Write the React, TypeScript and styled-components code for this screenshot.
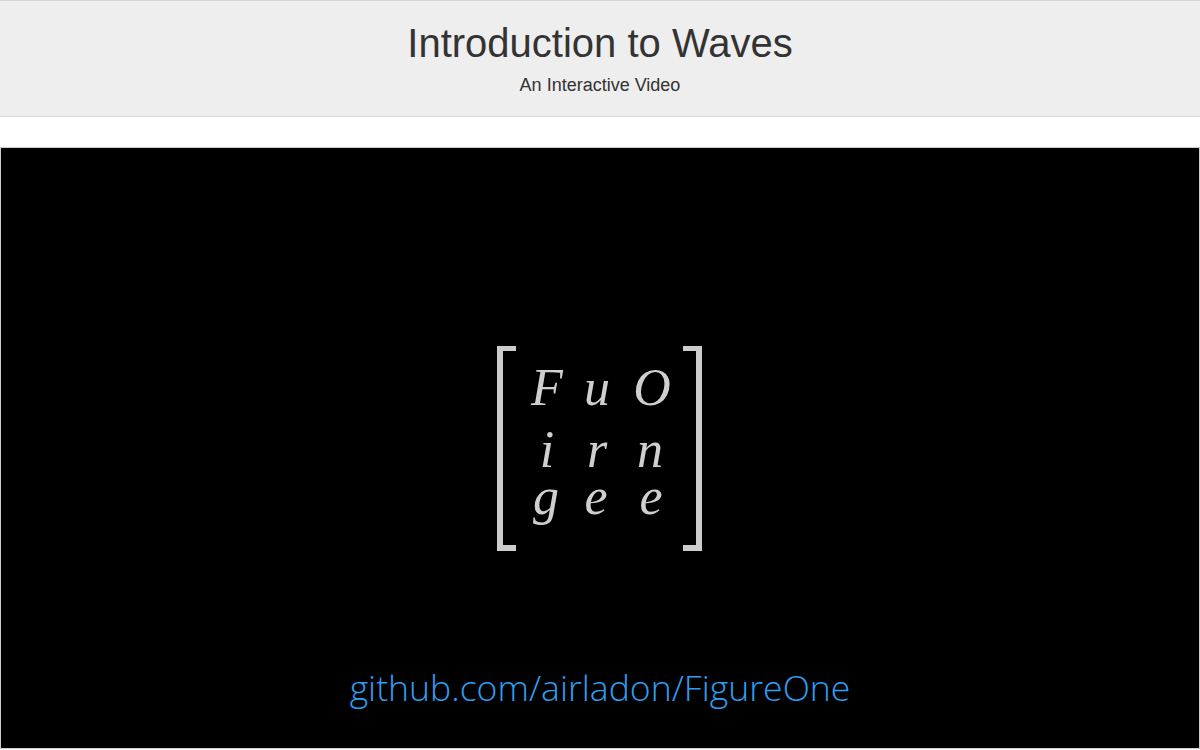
import React from "react";
import styled, { createGlobalStyle } from "styled-components";

const GlobalStyle = createGlobalStyle`
  html, body {
    margin: 0;
    padding: 0;
    background: #ffffff;
  }
  * { box-sizing: border-box; }
`;

const Page = styled.div`
  display: flex;
  flex-direction: column;
  width: 1200px;
  height: 750px;
  overflow: hidden;
`;

const Header = styled.header`
  height: 117px;
  background: #eeeeee;
  border-top: 1px solid #d6d6d6;
  border-bottom: 1px solid #d6d6d6;
  display: flex;
  flex-direction: column;
  align-items: center;
  font-family: "Liberation Sans", Arial, sans-serif;
  color: #333333;
`;

const Title = styled.h1`
  margin: 0;
  padding-top: 19px;
  font-size: 40px;
  font-weight: 400;
  line-height: 46px;
`;

const Subtitle = styled.div`
  margin-top: 8px;
  font-size: 18px;
  line-height: 22px;
`;

const Gap = styled.div`
  height: 30px;
`;

const Video = styled.section`
  height: 602px;
  flex-shrink: 0;
  background: #000000;
  border: 1px solid #cccccc;
  display: flex;
  flex-direction: column;
  align-items: center;
`;

const LogoWrap = styled.div`
  margin-top: 197px;
  display: flex;
  justify-content: center;
`;

const Link = styled.a`
  margin-top: 113px;
  font-family: "Open Sans", "Noto Sans", sans-serif;
  font-weight: 300;
  font-size: 35.6px;
  line-height: 44px;
  color: #2c9ff2;
  text-decoration: none;
`;

const Letter = styled.text`
  fill: #cfcfcf;
  font-family: "Times New Roman", "Liberation Serif", Times, "DejaVu Serif Condensed", serif;
  font-style: italic;
  font-stretch: condensed;
  font-size: 52px;
  text-anchor: middle;
`;

const letters: { ch: string; x: number; y: number }[] = [
  { ch: "F", x: 52, y: 60 },
  { ch: "u", x: 102, y: 60 },
  { ch: "O", x: 157, y: 60 },
  { ch: "i", x: 52, y: 122 },
  { ch: "r", x: 102, y: 122 },
  { ch: "n", x: 155, y: 122 },
  { ch: "g", x: 51, y: 169 },
  { ch: "e", x: 101, y: 169 },
  { ch: "e", x: 156, y: 169 },
];

function Logo() {
  return (
    <svg width="210" height="207" viewBox="0 0 210 207">
      <g fill="#cccccc">
        <rect x="2" y="1" width="6" height="205" />
        <rect x="2" y="1" width="19" height="5" />
        <rect x="2" y="200" width="19" height="6" />
        <rect x="201" y="1" width="6" height="205" />
        <rect x="188" y="1" width="19" height="5" />
        <rect x="188" y="200" width="19" height="6" />
      </g>
      {letters.map((l, i) => (
        <Letter key={i} x={l.x} y={l.y}>
          {l.ch}
        </Letter>
      ))}
    </svg>
  );
}

export default function App() {
  return (
    <>
      <GlobalStyle />
      <Page>
        <Header>
          <Title>Introduction to Waves</Title>
          <Subtitle>An Interactive Video</Subtitle>
        </Header>
        <Gap />
        <Video>
          <LogoWrap>
            <Logo />
          </LogoWrap>
          <Link href="#">github.com/airladon/FigureOne</Link>
        </Video>
      </Page>
    </>
  );
}
